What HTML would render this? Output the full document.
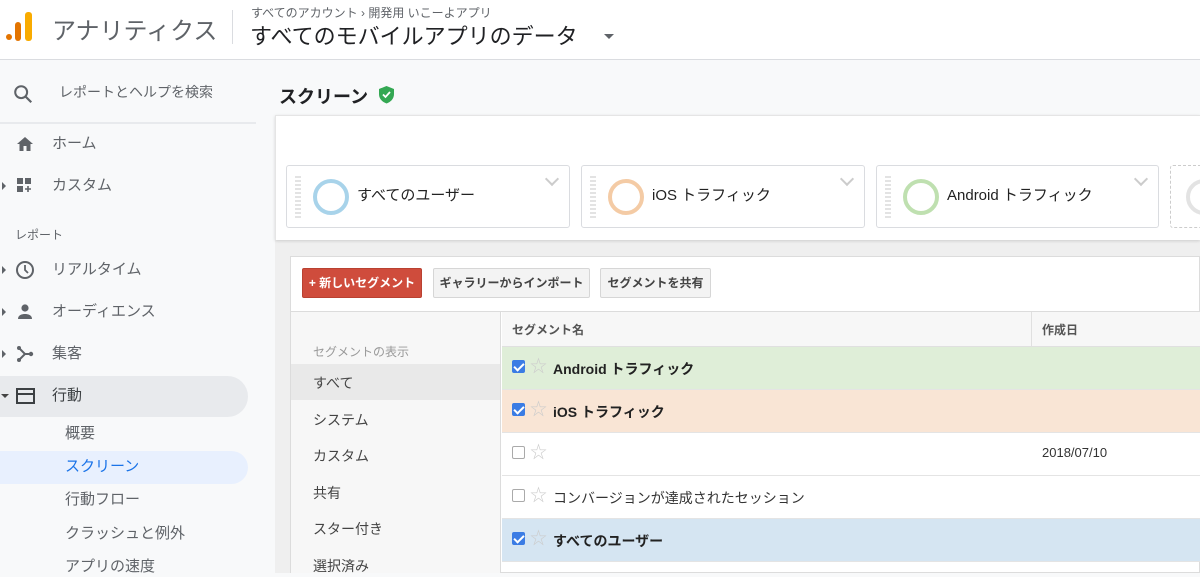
<!DOCTYPE html><html><head><meta charset="utf-8"><style>
*{margin:0;padding:0;box-sizing:border-box}
body{width:1200px;height:573px;overflow:hidden;position:relative;background:#f8f9fa;font-family:"Liberation Sans","Noto Sans CJK JP",sans-serif;color:#333}
.a{position:absolute}
.hdr{left:0;top:0;width:1200px;height:60px;background:#fff;border-bottom:1px solid #dadce0}
.side{left:0;top:61px;width:258px;height:512px;background:#f8f9fa}
.it{position:absolute;left:52px;font-size:15px;color:#5f6368;line-height:20px}
.sub{position:absolute;left:65px;font-size:15px;color:#5f6368;line-height:20px}
.tri{position:absolute;left:2px;width:0;height:0;border-top:4px solid transparent;border-bottom:4px solid transparent;border-left:4px solid #5f6368}
.card{position:absolute;top:165px;height:63px;background:#fff;border:1px solid #dadce0;border-radius:3px}
.card .grip{position:absolute;left:8px;top:10px;width:6px;height:44px;background:repeating-linear-gradient(#e3e3e3 0 2px,transparent 2px 4px)}
.card .ring{position:absolute;left:26px;top:13px;width:36px;height:36px;border-radius:50%;border:4px solid}
.card .t{position:absolute;left:70px;top:18px;font-size:15px;color:#222}
.card .chev{position:absolute;right:12px;top:8px;width:10px;height:10px;border-right:2px solid #ccc;border-bottom:2px solid #ccc;transform:rotate(45deg)}
.btn{position:absolute;top:268px;height:30px;font-size:12px;font-weight:bold;line-height:28px;text-align:center;border:1px solid #d6d6d6;background:#f3f3f3;color:#444;border-radius:2px}
.li{position:absolute;left:313px;font-size:14px;color:#444}
.row{position:absolute;left:502px;width:698px;height:43px;border-bottom:1px solid #e4e4e4}
.cb{position:absolute;left:10px;top:13px;width:13px;height:13px;border:1px solid #aaa;border-radius:2px;background:#fff}
.cb.on{background:#3b7ce4;border-color:#3b7ce4}
.cb.on:after{content:"";position:absolute;left:3px;top:0px;width:4px;height:8px;border-right:2px solid #fff;border-bottom:2px solid #fff;transform:rotate(45deg)}
.st{position:absolute;left:28px;top:11px;font-size:17px;color:#ccc;line-height:18px}
.rt{position:absolute;left:51px;top:12px;font-size:14px;font-weight:bold;color:#222}
</style></head><body>
<div class="a hdr">
 <div class="a" style="left:6px;top:34px;width:6px;height:6px;border-radius:50%;background:#e37400"></div>
 <div class="a" style="left:15px;top:22px;width:6px;height:19px;border-radius:3px;background:#e37400"></div>
 <div class="a" style="left:25px;top:12px;width:7px;height:29px;border-radius:3px;background:#f9ab00"></div>
 <div class="a" style="left:52px;top:11px;font-size:24px;color:#5f6368">アナリティクス</div>
 <div class="a" style="left:232px;top:10px;width:1px;height:34px;background:#dadce0"></div>
 <div class="a" style="left:251px;top:4px;font-size:12px;color:#5f6368">すべてのアカウント › 開発用 いこーよアプリ</div>
 <div class="a" style="left:250px;top:19px;font-size:22px;color:#202124">すべてのモバイルアプリのデータ</div>
 <div class="a" style="left:604px;top:34px;border-left:5px solid transparent;border-right:5px solid transparent;border-top:5px solid #5f6368"></div>
</div>
<div class="a side">
 <svg class="a" style="left:12px;top:22px" width="22" height="22" viewBox="0 0 24 24"><circle cx="10" cy="10" r="6.5" fill="none" stroke="#5f6368" stroke-width="2.2"/><path d="M15 15l6 6" stroke="#5f6368" stroke-width="2.4"/></svg>
 <div class="a" style="left:59px;top:21px;font-size:14px;color:#5f6368">レポートとヘルプを検索</div>
 <div class="a" style="left:0;top:61px;width:256px;height:2px;background:#e8eaed"></div>
</div>
<svg class="a" style="left:16px;top:136px" width="18" height="16" viewBox="0 0 18 16"><path d="M9 1L1 8h2.5v7h4v-5h3v5h4V8H17z" fill="#5f6368"/></svg>
<div class="it" style="top:134px">ホーム</div>
<div class="tri" style="top:182px"></div>
<svg class="a" style="left:16px;top:177px" width="18" height="18" viewBox="0 0 18 18"><rect x="1" y="1" width="6" height="6" fill="#5f6368"/><rect x="9" y="1" width="6" height="6" fill="#5f6368"/><rect x="1" y="9" width="6" height="6" fill="#5f6368"/><path d="M12 9v6M9 12h6" stroke="#5f6368" stroke-width="1.6"/></svg>
<div class="it" style="top:176px">カスタム</div>
<div class="a" style="left:15px;top:226px;font-size:12px;color:#5f6368">レポート</div>
<div class="tri" style="top:266px"></div>
<svg class="a" style="left:15px;top:260px" width="20" height="20" viewBox="0 0 20 20"><circle cx="10" cy="10" r="8" fill="none" stroke="#5f6368" stroke-width="2"/><path d="M10 5v5l3 3" fill="none" stroke="#5f6368" stroke-width="1.8"/></svg>
<div class="it" style="top:260px">リアルタイム</div>
<div class="tri" style="top:308px"></div>
<svg class="a" style="left:16px;top:303px" width="18" height="18" viewBox="0 0 18 18"><circle cx="9" cy="5" r="3.6" fill="#5f6368"/><path d="M2 16c0-4 4-5 7-5s7 1 7 5z" fill="#5f6368"/></svg>
<div class="it" style="top:302px">オーディエンス</div>
<div class="tri" style="top:350px"></div>
<svg class="a" style="left:16px;top:345px" width="18" height="18" viewBox="0 0 18 18"><path d="M3 3l6 6-6 6M9 9h6" fill="none" stroke="#5f6368" stroke-width="2"/><circle cx="15" cy="9" r="2.2" fill="#5f6368"/><circle cx="3" cy="3" r="2" fill="#5f6368"/><circle cx="3" cy="15" r="2" fill="#5f6368"/></svg>
<div class="it" style="top:344px">集客</div>
<div class="a" style="left:0;top:376px;width:248px;height:41px;background:#e8eaed;border-radius:0 21px 21px 0"></div>
<div class="a" style="left:1px;top:394px;border-left:4px solid transparent;border-right:4px solid transparent;border-top:4px solid #444"></div>
<svg class="a" style="left:16px;top:388px" width="19" height="16" viewBox="0 0 19 16"><rect x="1" y="1" width="17" height="14" fill="none" stroke="#3c4043" stroke-width="2"/><path d="M1 6h17" stroke="#3c4043" stroke-width="2"/></svg>
<div class="it" style="top:386px;color:#3c4043">行動</div>
<div class="sub" style="top:424px">概要</div>
<div class="a" style="left:0;top:451px;width:248px;height:33px;background:#e8f0fe;border-radius:0 17px 17px 0"></div>
<div class="sub" style="top:457px;color:#1a73e8">スクリーン</div>
<div class="sub" style="top:490px">行動フロー</div>
<div class="sub" style="top:524px">クラッシュと例外</div>
<div class="sub" style="top:557px">アプリの速度</div>

<div class="a" style="left:275px;top:240px;width:925px;height:333px;background:#efefef"></div>
<div class="a" style="left:279px;top:83px;font-size:18px;font-weight:bold;color:#202124">スクリーン</div>
<svg class="a" style="left:378px;top:85px" width="17" height="19" viewBox="0 0 17 19"><path d="M8.5 1L1 4v5c0 5 3.5 8 7.5 9.5C12.5 17 16 14 16 9V4z" fill="#34a853"/><path d="M5 9.5l2.5 2.5 4.5-5" fill="none" stroke="#fff" stroke-width="1.8"/></svg>
<div class="a" style="left:275px;top:115px;width:925px;height:125px;background:#fff;border-top:1px solid #e5e5e5;border-left:1px solid #e5e5e5;box-shadow:0 1px 3px rgba(0,0,0,.15)"></div>
<div class="card" style="left:286px;width:284px"><div class="grip"></div><div class="ring" style="border-color:#a8d3ea"></div><div class="t">すべてのユーザー</div><div class="chev"></div></div>
<div class="card" style="left:581px;width:284px"><div class="grip"></div><div class="ring" style="border-color:#f4cba5"></div><div class="t">iOS トラフィック</div><div class="chev"></div></div>
<div class="card" style="left:876px;width:283px"><div class="grip"></div><div class="ring" style="border-color:#bfe0b0"></div><div class="t">Android トラフィック</div><div class="chev"></div></div>
<div class="card" style="left:1170px;width:40px;border:1px dashed #ccc"><div class="ring" style="left:15px;border-color:#e3e3e3"></div></div>

<div class="a" style="left:290px;top:256px;width:910px;height:317px;background:#fff;border:1px solid #dcdcdc"></div>
<div class="btn" style="left:302px;width:120px;background:#cf4c3c;border-color:#b94131;color:#fff">+ 新しいセグメント</div>
<div class="btn" style="left:433px;width:157px">ギャラリーからインポート</div>
<div class="btn" style="left:600px;width:111px">セグメントを共有</div>
<div class="a" style="left:291px;top:311px;width:909px;height:1px;background:#dcdcdc"></div>
<div class="a" style="left:291px;top:312px;width:210px;height:261px;background:#f7f7f7;border-right:1px solid #dcdcdc"></div>
<div class="a" style="left:313px;top:343px;font-size:12px;color:#999">セグメントの表示</div>
<div class="a" style="left:291px;top:364px;width:209px;height:36px;background:#e9e9e9"></div>
<div class="li" style="top:373px">すべて</div>
<div class="li" style="top:410px">システム</div>
<div class="li" style="top:446px">カスタム</div>
<div class="li" style="top:483px">共有</div>
<div class="li" style="top:519px">スター付き</div>
<div class="li" style="top:556px">選択済み</div>
<div class="a" style="left:502px;top:312px;width:698px;height:35px;background:#f7f7f7;border-bottom:1px solid #e0e0e0"></div>
<div class="a" style="left:1031px;top:312px;width:1px;height:35px;background:#e0e0e0"></div>
<div class="a" style="left:512px;top:321px;font-size:12px;font-weight:bold;color:#555">セグメント名</div>
<div class="a" style="left:1042px;top:321px;font-size:12px;font-weight:bold;color:#555">作成日</div>
<div class="row" style="top:347px;background:#dfeed8"><div class="cb on"></div><div class="st">☆</div><div class="rt">Android トラフィック</div></div>
<div class="row" style="top:390px;background:#f9e5d5"><div class="cb on"></div><div class="st">☆</div><div class="rt">iOS トラフィック</div></div>
<div class="row" style="top:433px;background:#fff"><div class="cb"></div><div class="st">☆</div><div class="a" style="left:540px;top:12px;font-size:13px;color:#333">2018/07/10</div></div>
<div class="row" style="top:476px;background:#fff"><div class="cb"></div><div class="st">☆</div><div class="rt" style="font-weight:normal;color:#333">コンバージョンが達成されたセッション</div></div>
<div class="row" style="top:519px;background:#d5e5f2"><div class="cb on"></div><div class="st">☆</div><div class="rt">すべてのユーザー</div></div>
</body></html>
